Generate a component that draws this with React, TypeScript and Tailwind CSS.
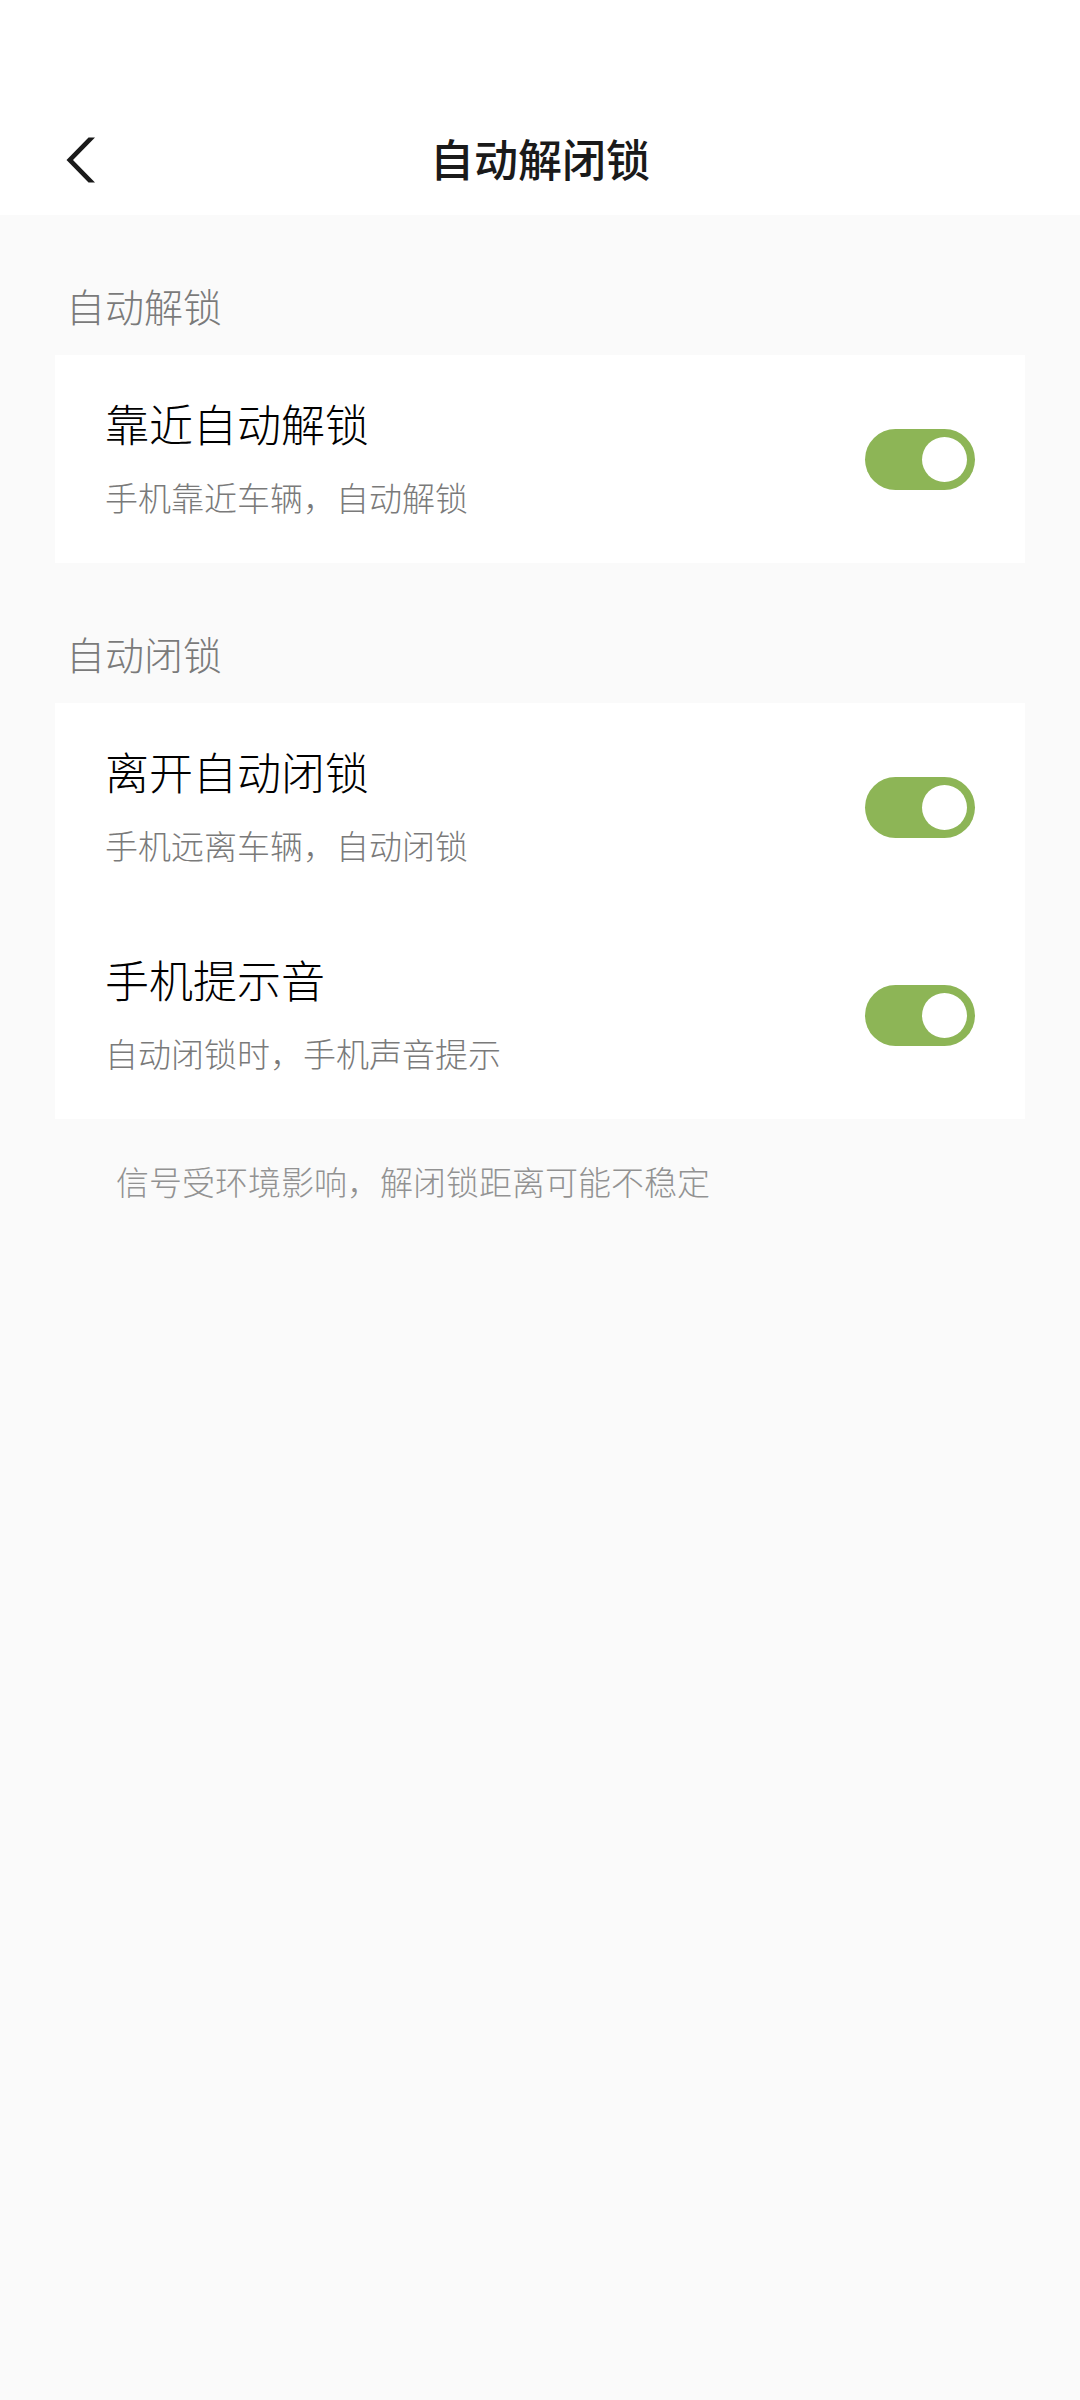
import { useId, useState } from "react";

interface Setting {
  id: string;
  title: string;
  desc: string;
}

interface SettingGroup {
  label: string;
  items: Setting[];
}

const GROUPS: SettingGroup[] = [
  {
    label: "自动解锁",
    items: [{ id: "unlock", title: "靠近自动解锁", desc: "手机靠近车辆，自动解锁" }],
  },
  {
    label: "自动闭锁",
    items: [
      { id: "lock", title: "离开自动闭锁", desc: "手机远离车辆，自动闭锁" },
      { id: "sound", title: "手机提示音", desc: "自动闭锁时，手机声音提示" },
    ],
  },
];

// ─── Header ───────────────────────────────────────────────────────────────────

function Header() {
  return (
    <header className="grid grid-cols-[1fr_auto_1fr] items-center bg-white px-14 pt-[106px] pb-[1px]">
      <button type="button" aria-label="返回" className="flex h-[108px] w-[108px] items-center pl-[10px]">
        <svg width="30" height="46" viewBox="0 0 30 46" fill="#1a1a1a">
          <path d="M22.5 0.5H29L7 23L29 45.5H22.5L0.5 23Z" />
        </svg>
      </button>
      <h1 className="pb-1 text-[44px] leading-[60px] font-medium text-[#1a1a1a]">自动解闭锁</h1>
    </header>
  );
}

// ─── Setting row ──────────────────────────────────────────────────────────────

function SettingRow({ item }: { item: Setting }) {
  const [on, setOn] = useState(true);
  const id = useId();

  return (
    <div className="flex items-center justify-between gap-8 px-[50px]">
      <div className="flex flex-col gap-5 pt-[38px] pb-[42px]">
        <label htmlFor={id} className="text-[44px] leading-[60px] font-light text-black">
          {item.title}
        </label>
        <p id={`${id}-desc`} className="text-[33px] leading-[48px] font-light text-[#7a7a7a]">
          {item.desc}
        </p>
      </div>
      <input
        id={id}
        type="checkbox"
        role="switch"
        aria-describedby={`${id}-desc`}
        checked={on}
        onChange={(e) => setOn(e.target.checked)}
        className="flex h-[61px] w-[110px] shrink-0 cursor-pointer appearance-none items-center rounded-full bg-[#d4d4d4] p-2 before:h-[45px] before:w-[45px] before:rounded-full before:bg-white before:content-[''] checked:justify-end checked:bg-[#8db556]"
      />
    </div>
  );
}

// ─── Page ─────────────────────────────────────────────────────────────────────

export default function App() {
  return (
    <div className="min-h-screen bg-[#fafafa] font-['Noto_Sans_CJK_SC',sans-serif]">
      <Header />
      <main className="px-[55px]">
        {GROUPS.map((group) => (
          <section key={group.label}>
            <h2 className="px-[11px] pt-[62px] pb-[22px] text-[39px] leading-[56px] font-light text-[#7a7a7a]">
              {group.label}
            </h2>
            <div className="bg-white">
              {group.items.map((item) => (
                <SettingRow key={item.id} item={item} />
              ))}
            </div>
          </section>
        ))}
        <p className="px-[61px] pt-[38px] text-[33px] leading-[48px] font-light text-[#929292]">
          信号受环境影响，解闭锁距离可能不稳定
        </p>
      </main>
    </div>
  );
}
